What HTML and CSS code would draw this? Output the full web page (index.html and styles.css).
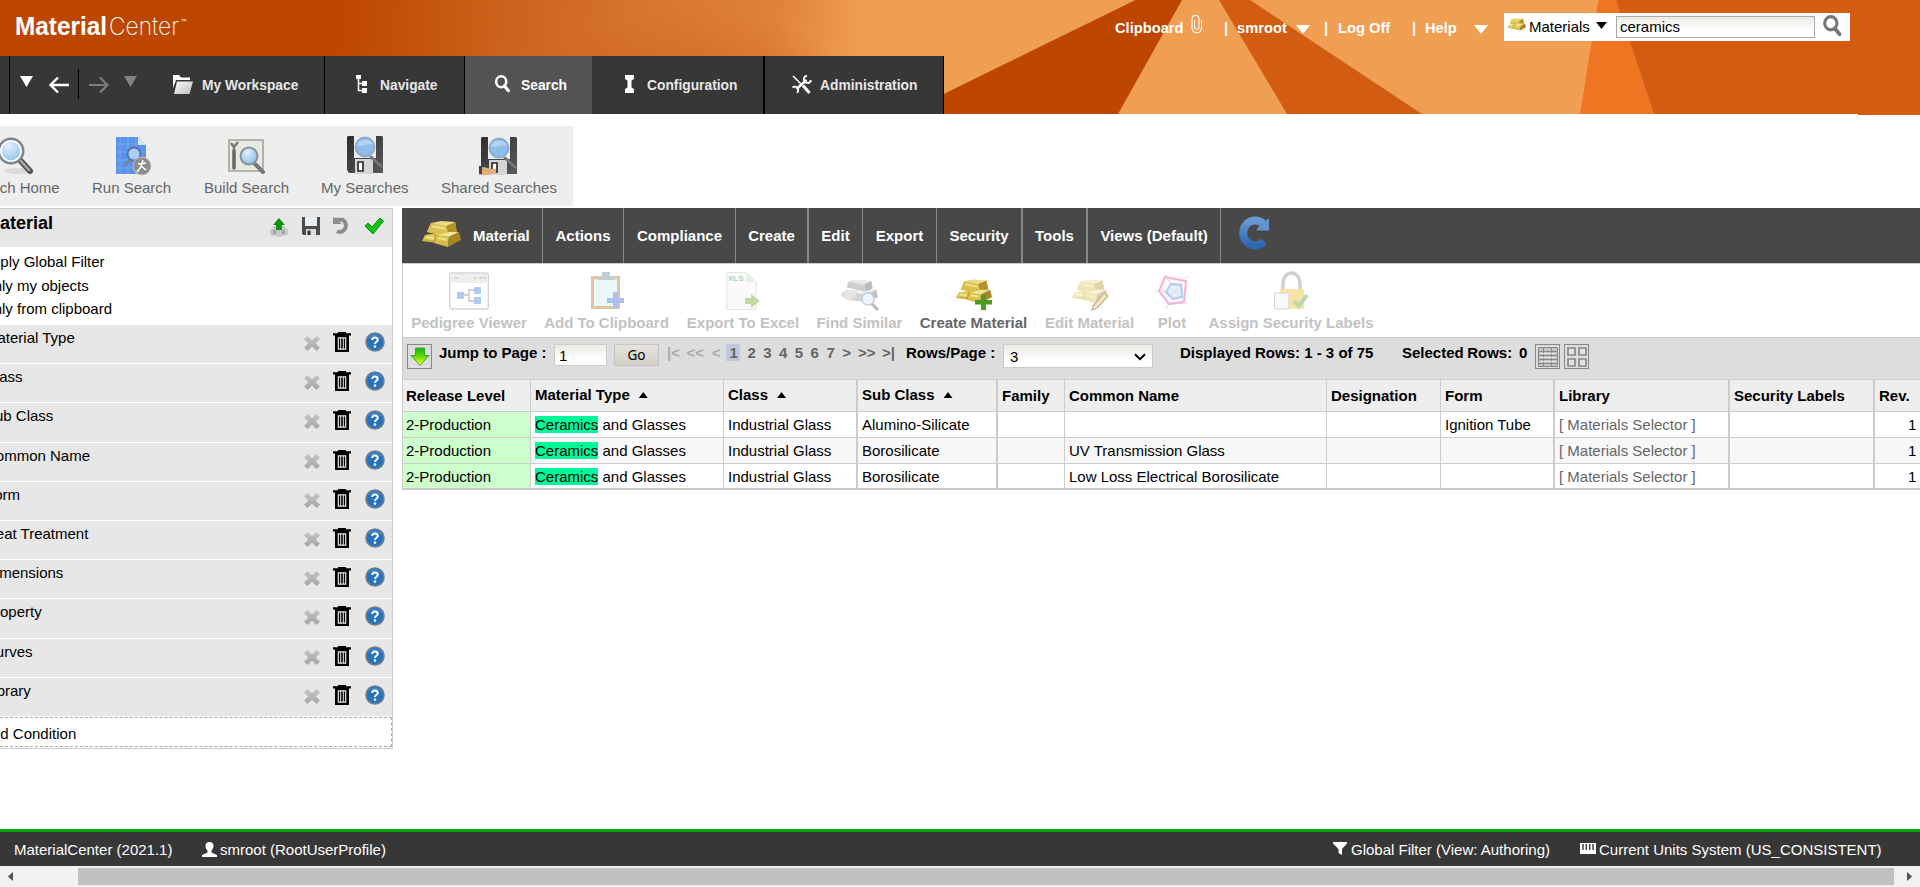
FILE: index.html
```html
<!DOCTYPE html>
<html lang="en">
<head>
<meta charset="utf-8">
<title>MaterialCenter</title>
<link rel="stylesheet" href="styles.css">
</head>
<body>
<svg class="defs" width="0" height="0" aria-hidden="true">
  <defs>
    <linearGradient id="gTop" x1="0" y1="0" x2="1" y2="1"><stop offset="0" stop-color="#e3cf6c"/><stop offset=".5" stop-color="#f1e28c"/><stop offset="1" stop-color="#d3b74a"/></linearGradient>
    <linearGradient id="gFront" x1="0" y1="0" x2="0" y2="1"><stop offset="0" stop-color="#e6cc5a"/><stop offset="1" stop-color="#c9ab36"/></linearGradient>
    <linearGradient id="gs1" x1="0" y1="0" x2="1" y2="1"><stop offset="0" stop-color="#8d8d8d"/><stop offset=".5" stop-color="#c8c8c8"/><stop offset="1" stop-color="#777"/></linearGradient>
    <radialGradient id="lens" cx=".4" cy=".3" r=".8"><stop offset="0" stop-color="#e4f0fb"/><stop offset=".6" stop-color="#a9cdf0"/><stop offset="1" stop-color="#7fb0e2"/></radialGradient>
    <linearGradient id="disk" x1="0" y1="0" x2="1" y2="1"><stop offset="0" stop-color="#2e2e2e"/><stop offset="1" stop-color="#5a5a5a"/></linearGradient>
    <linearGradient id="refresh" x1="0" y1="0" x2="0" y2="1"><stop offset="0" stop-color="#6a9ad4"/><stop offset="1" stop-color="#2f66b0"/></linearGradient>
    <linearGradient id="down" x1="0" y1="0" x2="0" y2="1"><stop offset="0" stop-color="#14b414"/><stop offset=".4" stop-color="#4fd400"/><stop offset="1" stop-color="#ffff30"/></linearGradient>
    <linearGradient id="xg" x1="0" y1="0" x2="0" y2="1"><stop offset="0" stop-color="#c4c4c4"/><stop offset="1" stop-color="#a6a6a6"/></linearGradient>
    <linearGradient id="fold" x1="0" y1="0" x2="1" y2="1"><stop offset="0" stop-color="#fff"/><stop offset="1" stop-color="#bbb"/></linearGradient>
    <symbol id="gold" viewBox="0 0 40 28">
      <path d="M4 15 16 13 22 15 23 24 1 21z" fill="url(#gFront)"/>
      <path d="M10 3 20 1 34 2 36 13 28 16 6 12z" fill="url(#gTop)"/>
      <path d="M10 3 25 6 28 16 6 12z" fill="#d9bf4c"/>
      <path d="M25 6 34 2 36 12 28 16z" fill="#b3922c"/>
      <path d="M12 5 24 7.500 25 10 10 7.500z" fill="#eddd84"/>
      <path d="M17 15 28 17 27 27 13 23z" fill="#d9bd48"/>
      <path d="M17 15 28 12 38 12 28 17z" fill="#f1e493"/>
      <path d="M28 17 38 12 40 20 27 27z" fill="#a98722"/>
      <path d="M6 16 14 17 13 20 4 18.500zM18 17 26 18.500 25.500 21 16.500 19z" fill="#efdf88"/>
      <path d="M15 14 13 22" stroke="#a98a28" stroke-width=".8"/>
    </symbol>
    <symbol id="silver" viewBox="0 0 40 28">
      <path d="M1 15 5 12 18 12 21 21 19 24 6 22 0 18z" fill="url(#gs1)"/>
      <path d="M8 3 13 1 32 2 34 10 29 14 6 9z" fill="url(#gs1)"/>
      <path d="M25 6 33 2 34 10 27 14z" fill="#555"/>
      <path d="M9 4 25 6 27 14 6 9z" fill="#888"/>
      <path d="M17 15 28 17 27 26 14 22z" fill="#999"/>
      <path d="M28 17 38 11 40 19 27 26z" fill="#666"/>
      <path d="M17 15 30 12 38 11 28 17zM3 14 13 12 17 14 5 16zM10 3 14 1 31 2 25 5z" fill="#ccc"/>
    </symbol>
    <symbol id="mag" viewBox="0 0 20 20">
      <ellipse cx="8" cy="7.500" rx="5.600" ry="6" fill="none" stroke="currentColor" stroke-width="2.800"/>
      <path d="M11.500 12 16 17.500" stroke="currentColor" stroke-width="3.400" stroke-linecap="round"/>
    </symbol>
    <symbol id="biglens" viewBox="0 0 36 40">
      <ellipse cx="20" cy="35" rx="15" ry="3" fill="#000" opacity=".08"/>
      <path d="M20 23 31 35" stroke="#555" stroke-width="6" stroke-linecap="round"/>
      <path d="M21 24 30 34" stroke="#aaa" stroke-width="2.500" stroke-linecap="round"/>
      <circle cx="12" cy="15" r="12.300" fill="url(#lens)" stroke="#7d858e" stroke-width="2.400"/>
      <circle cx="12" cy="15" r="10" fill="none" stroke="#fff" stroke-width="1.600"/>
    </symbol>
    <symbol id="save" viewBox="0 0 36 38">
      <path d="M1 0H35L36 1V37H2L0 34V1z" fill="url(#disk)"/>
      <path d="M7 0H29V22H7z" fill="#e9eef2"/>
      <path d="M8 23H26V38H8z" fill="#d6d6d6"/><path d="M11 26H16V35H11z" fill="#fff" stroke="#222" stroke-width="1.600"/>
      <path d="M24 21 34 30" stroke="#777" stroke-width="3" stroke-linecap="round"/>
      <circle cx="18" cy="11" r="9.500" fill="#8fbde9" stroke="#8ca9c6" stroke-width="1.800"/>
      <path d="M9.500 9A9 8 0 0 1 26.500 9C21 6 15 12 9.500 9z" fill="#c3ddf5" opacity=".7"/>
    </symbol>
    <symbol id="del" viewBox="0 0 16 15"><path d="M3.500 0 8 4.200 12.500 0 16 3.300 11.700 7.500 16 11.700 12.500 15 8 10.800 3.500 15 0 11.700 4.300 7.500 0 3.300z" fill="url(#xg)"/></symbol>
    <symbol id="trash" viewBox="0 0 18 20"><path d="M5 0H13V1.300H18V3.500H0V1.300H5zM2 3H16V20H2z" fill="#000"/><path d="M5.300 5.800H12.700V17.200H5.300z" fill="none" stroke="#e7e7e7" stroke-width="1.200"/><path d="M7.700 6V17M10.300 6V17" stroke="#e7e7e7" stroke-width="1"/></symbol>
    <symbol id="help" viewBox="0 0 20 20"><circle cx="10" cy="10" r="9" fill="#2573be" stroke="#72808e" stroke-width="1.600"/><path d="M4 6A8 8 0 0 1 16 6" fill="none" stroke="#6aa5dc" stroke-width="1" opacity=".6"/><path d="M7.200 8C7.200 4.800 12.800 4.800 12.800 7.800 12.800 9.800 10 9.800 10 12" fill="none" stroke="#fff" stroke-width="2"/><circle cx="10" cy="14.600" r="1.300" fill="#fff"/></symbol>
  </defs>
</svg>

<header class="banner">
  <svg class="rays" width="1920" height="114" viewBox="0 0 1920 114" aria-hidden="true">
    <path d="M1135.500 0H1182L1118 114H903z" fill="#bd4600"/>
    <path d="M1219 0H1250L1422 114H1287z" fill="#d25d12"/>
    <path d="M1598.500 0H1616L1654 114H1580z" fill="#f07522"/>
    <path d="M1616 0H1920V114H1654z" fill="#d25d12"/>
  </svg>
  <div class="topline">
    <svg class="logo" width="176" height="30" viewBox="0 0 176 30">
      <text x="0" y="23" class="logo-b" textLength="92" lengthAdjust="spacingAndGlyphs">Material</text>
      <text x="94" y="23" class="logo-l" textLength="70" lengthAdjust="spacingAndGlyphs">Center</text>
      <text x="165.500" y="11" class="logo-t">™</text>
    </svg>
    <div class="account">
      <span>Clipboard</span>
      <svg width="12" height="18" viewBox="0 0 12 18"><path d="M3.500 5V12.500A2.300 2.300 0 0 0 8 12.500V4A3.200 3.200 0 0 0 1 4V13A4.500 4.500 0 0 0 10.500 13V5" fill="none" stroke="#fff" stroke-width="1.100"/></svg>
      <span>|</span><span>smroot</span><i class="tri"></i>
      <span>|</span><span>Log Off</span>
      <span>|</span><span>Help</span><i class="tri"></i>
    </div>
    <div class="quick">
      <svg width="19" height="15"><use href="#gold" width="19" height="15"/></svg>
      <span class="kind">Materials</span><i class="tri black"></i>
      <div class="field q">ceramics</div>
      <svg class="go-mag" width="22" height="22"><use href="#mag" width="22" height="22"/></svg>
    </div>
  </div>
  <nav class="mainnav">
    <div class="edge"></div>
    <div class="history">
      <i class="tri"></i>
      <svg width="21" height="18" viewBox="0 0 21 18"><path d="M20 9H2M9 1.500 1.500 9 9 16.500" fill="none" stroke="#fff" stroke-width="2.400"/></svg>
      <b></b>
      <svg width="21" height="18" viewBox="0 0 21 18"><path d="M1 9H19M12 1.500 19.500 9 12 16.500" fill="none" stroke="#7d7d7d" stroke-width="2.200"/></svg>
      <i class="tri dim"></i>
    </div>
    <a class="tab ws"><svg width="20" height="19" viewBox="0 0 20 19"><path d="M0 0H6L8 2.500H17V5H3L2 8 0 13z" fill="#fff"/><path d="M4 6.500H20L16.500 19H1z" fill="url(#fold)"/></svg><span>My Workspace</span></a>
    <a class="tab nv"><svg width="11" height="18" viewBox="0 0 11 18"><path d="M0 0H5V4H0zM6 6H11V11H6zM6 13H11V18H6z" fill="#fff"/><path d="M2.500 4V15.500H7M2.500 8.500H7" fill="none" stroke="#fff" stroke-width="1.500"/></svg><span>Navigate</span></a>
    <a class="tab se on"><svg width="18" height="18"><use href="#mag" width="18" height="18"/></svg><span>Search</span></a>
    <a class="tab cf"><svg width="9" height="18" viewBox="0 0 9 18"><path d="M0 0H9V4L6.500 5.500V12.500L9 14V18H0V14L2.500 12.500V5.500L0 4z" fill="#fff"/></svg><span>Configuration</span></a>
    <a class="tab ad"><svg width="20" height="19" viewBox="0 0 20 19"><path d="M1 1 9 9" stroke="#fff" stroke-width="1.600"/><path d="M11 10.500 17.500 18" stroke="#fff" stroke-width="3"/><path d="M4.500 14 14.500 5" stroke="#fff" stroke-width="2.400"/><path d="M15 .8A3.600 3.600 0 1 0 19 5M.5 12.500A3.200 3.200 0 1 1 5 17.800" fill="none" stroke="#fff" stroke-width="1.800"/></svg><span>Administration</span></a>
  </nav>
</header>
<div class="under"></div>

<section class="launch">
  <div class="l0"><svg width="36" height="40"><use href="#biglens" width="36" height="40"/></svg><span>Search Home</span></div>
  <div class="l1"><svg width="38" height="40" viewBox="0 0 38 40"><path d="M2 1H24L32 9V38H2z" fill="#5b93ea"/><path d="M6 1V38M14 1V38M22 1V38M2 8H30M2 16H32M2 24H32M2 32H32" stroke="#76a6f0" stroke-width="1"/><path d="M24 1V9H32z" fill="#d8e6fb"/><path d="M17 23 10 30" stroke="#7c8795" stroke-width="3"/><circle cx="20" cy="18" r="6.500" fill="#aecdf5" stroke="#56779f" stroke-width="2"/><circle cx="28" cy="30" r="9" fill="#8d8d8d" stroke="#c4c4c4"/><path d="M29 24 27 31 23 36M27 30 32 34M24 28 32 27" stroke="#fff" stroke-width="1.600" fill="none"/></svg><span>Run Search</span></div>
  <div class="l2"><svg width="38" height="38" viewBox="0 0 38 38"><path d="M1 3H35V34H1z" fill="#e9e9e4" stroke="#a3a39b" stroke-width="1.600"/><path d="M6 14V31" stroke="#666" stroke-width="3.500" stroke-linecap="round"/><path d="M3 6 6 10 10 5M6 10V14" stroke="#777" stroke-width="2.500" fill="none"/><path d="M27 27 35 35" stroke="#777" stroke-width="4" stroke-linecap="round"/><circle cx="21" cy="19" r="8.500" fill="url(#lens)" stroke="#8a9299" stroke-width="2"/></svg><span>Build Search</span></div>
  <div class="l3"><svg width="36" height="38"><use href="#save" width="36" height="38"/></svg><span>My Searches</span></div>
  <div class="l4"><svg width="38" height="38" viewBox="0 0 38 38"><use href="#save" x="2" width="36" height="38"/><path d="M0 31 5 30 12 32H17V36L9 38H0z" fill="#e2ac77"/><path d="M0 29H3V37H0z" fill="#444"/></svg><span>Shared Searches</span></div>
</section>

<main class="work">
  <aside class="criteria">
    <div class="chead"><h2>Material</h2>
      <svg width="20" height="20" viewBox="0 0 20 20"><path d="M1 13 5 9H15L19 13V18L10 20 1 18z" fill="#c5c9ca"/><path d="M4 13H7V17H4zM13 13H16V17H13z" fill="#9ba3a3"/><path d="M10 1 16 8H13V13H7V8H4z" fill="#0b930b"/></svg>
      <svg width="18" height="18" viewBox="0 0 18 18"><path d="M0 0H18V18H1.500L0 16.500z" fill="#4b4b4b"/><path d="M3 0H15V9H3z" fill="#e6edf5"/><path d="M4 12H14V18H4z" fill="#ddd"/><path d="M5.500 13.500H8.500V18H5.500z" fill="#333"/></svg>
      <svg width="18" height="18" viewBox="0 0 18 18"><path d="M1 3H9.500A5.500 5.700 0 1 1 4 14.500" fill="none" stroke="#8d8d8d" stroke-width="4" transform="translate(0 -.3)"/><path d="M0 0 9 7H0z" fill="#8d8d8d"/></svg>
      <svg width="20" height="18" viewBox="0 0 20 18"><path d="M1 9 4 6 8 10 16 1 19.500 4 9 17z" fill="#12c112" stroke="#0a8c0a"/></svg>
    </div>
    <div class="flags"><span>Apply Global Filter</span><span>Only my objects</span><span>Only from clipboard</span></div>
    <div class="crit" id="crit"></div>
    <div class="addc">Add Condition</div>
  </aside>

  <section class="results">
    <div class="menu">
      <a class="m0"><svg width="40" height="28"><use href="#gold" width="40" height="28"/></svg><span>Material</span></a>
      <a class="m1">Actions</a><a class="m2">Compliance</a><a class="m3">Create</a><a class="m4">Edit</a><a class="m5">Export</a><a class="m6">Security</a><a class="m7">Tools</a><a class="m8">Views (Default)</a>
      <svg class="reload" width="34" height="36" viewBox="0 0 34 36"><path d="M26 8.500A12 12.500 0 1 0 27 26.500" fill="none" stroke="url(#refresh)" stroke-width="8"/><path d="M19 15.500 24 9 32 3V15.500z" fill="#6093d0"/></svg>
    </div>
    <div class="actions">
      <div class="a0 off"><svg width="40" height="40" viewBox="0 0 40 40"><rect x=".7" y="2" width="38.600" height="36" rx="2" fill="#fff" stroke="#999" stroke-width="1.400"/><path d="M1 3H39V12H1z" fill="#d5d5d5"/><path d="M5 7H9M25 7H28M30 7H33M34 7H37" stroke="#999" stroke-width="2"/><path d="M14 24H20M25 19H20V30H25" fill="none" stroke="#666" stroke-width="1.300"/><path d="M8 21H15V28H8zM25 16H32V23H25zM25 26H32V33H25z" fill="#3a83dc"/></svg><span>Pedigree Viewer</span></div>
      <div class="a1 off"><svg width="34" height="40" viewBox="0 0 34 40"><path d="M1 5H30V38H1z" fill="#b86c22"/><path d="M4 8H27V35H4z" fill="#cdeefa"/><path d="M7 5H12V1H20V5H25V9H7z" fill="#6f8285"/><path d="M23 21H28V27H34V32H28V38H23V32H17V27H23z" fill="#2b66d6"/></svg><span>Add To Clipboard</span></div>
      <div class="a2 off"><svg width="34" height="40" viewBox="0 0 34 40"><path d="M.7 1.500H20L30 11V38.500H.7z" fill="#f2f5f1" stroke="#bbb"/><path d="M20 1.500V11H30z" fill="#d2d6d1"/><text x="2" y="10" class="xls">XLS</text><path d="M19 27H25V23L34 30 25 37V33H19z" fill="#5ea521"/></svg><span>Export To Excel</span></div>
      <div class="a3 off"><svg width="40" height="40" viewBox="0 0 40 40"><use href="#silver" x="1" y="7" width="37" height="28"/><path d="M31 32 38 39" stroke="#555" stroke-width="3"/><circle cx="28" cy="28" r="6" fill="#d5e9fb" stroke="#5d8db8" stroke-width="1.500"/></svg><span>Find Similar</span></div>
      <div class="a4"><svg width="40" height="40" viewBox="0 0 40 40"><use href="#gold" x="1" y="7" width="37" height="27"/><path d="M27 24H32V29H38V33.500H32V39H27V33.500H21V29H27z" fill="#4d9c20"/></svg><span>Create Material</span></div>
      <div class="a5 off"><svg width="40" height="40" viewBox="0 0 40 40"><use href="#gold" x="1" y="7" width="37" height="27"/><path d="M23 35 34 22 38 25 27 37 22 39z" fill="#edc444" stroke="#594422" stroke-width="1.200"/></svg><span>Edit Material</span></div>
      <div class="a6 off"><svg width="34" height="40" viewBox="0 0 34 40"><path d="M10 6 31 10 29 31 14 33 4 20z" fill="#fae9f3" stroke="#e84763" stroke-width="2"/><path d="M4 20 14 33 29 31" fill="none" stroke="#d04bd0" stroke-width="2"/><path d="M16 13 26 14 27 26 18 28 11 21z" fill="#c5dcfa" stroke="#397ce3" stroke-width="2"/><path d="M16 17 23 24M23 17 16 24M10 3 16 14M0 20H14M29 8 34 5M29 30 33 34M14 32 11 38" stroke="#999" stroke-width=".8"/></svg><span>Plot</span></div>
      <div class="a7 off"><svg width="36" height="40" viewBox="0 0 36 40"><path d="M10 20V12A8.500 10 0 0 1 27 12V20" fill="none" stroke="#888" stroke-width="3.400"/><path d="M7 18H31V38H7z" fill="#f2ba20"/><path d="M1.500 22H16V38H1.500z" fill="#eee" stroke="#999"/><path d="M21 30 26 35 34 24" fill="none" stroke="#4fac27" stroke-width="4"/></svg><span>Assign Security Labels</span></div>
    </div>
    <div class="pager">
      <div class="ibtn p-dl"><svg width="20" height="20" viewBox="0 0 20 20"><path d="M5.500 1H14.500V8.500H19L10 18.500 1 8.500H5.500z" fill="url(#down)" stroke="#35a835"/></svg></div>
      <span class="p-jump">Jump to Page :</span>
      <div class="field p-in">1</div>
      <div class="gobtn">Go</div>
      <div class="pages"><i class="k0">|&lt;</i><i class="k1">&lt;&lt;</i><i class="k2">&lt;</i><b class="cur">1</b><b>2</b><b>3</b><b>4</b><b>5</b><b>6</b><b>7</b><b>&gt;</b><b class="w">&gt;&gt;</b><b class="w">&gt;|</b></div>
      <span class="p-rows">Rows/Page :</span>
      <div class="field p-sel"><span>3</span><svg width="12" height="8" viewBox="0 0 12 8"><path d="M1 1.200 6 6.200 11 1.200" fill="none" stroke="#000" stroke-width="2"/></svg></div>
      <span class="p-disp">Displayed Rows: 1 - 3 of 75</span>
      <span class="p-selr">Selected Rows:&nbsp; 0</span>
      <div class="ibtn p-g1"><svg width="20" height="20" viewBox="0 0 20 20"><path d="M.5.500H19.500V19.500H.5z" fill="#c4c4c4" stroke="#888"/><path d="M5.500 0V20M13.500 0V20M0 4.500H20M0 8.500H20M0 12.500H20M0 16.500H20" stroke="#888" stroke-width="1"/><path d="M2 6.500H18M2 10.500H18M2 14.500H18" stroke="#e4e4e4" stroke-width="1"/></svg></div>
      <div class="ibtn p-g2"><svg width="20" height="20" viewBox="0 0 20 20"><path d="M1 1H8V8H1zM12 1H19V8H12zM1 12H8V19H1zM12 12H19V19H12z" fill="#e4e4e4" stroke="#888" stroke-width="1.700"/></svg></div>
    </div>
    <table>
      <colgroup><col class="c0"><col class="c1"><col class="c2"><col class="c3"><col class="c4"><col class="c5"><col class="c6"><col class="c7"><col class="c8"><col class="c9"><col class="c10"></colgroup>
      <thead><tr><th>Release Level</th><th class="s">Material Type<i></i></th><th class="s d">Class<i></i></th><th class="s d">Sub Class<i></i></th><th>Family</th><th>Common Name</th><th>Designation</th><th class="d">Form</th><th class="d">Library</th><th class="d">Security Labels</th><th>Rev.</th></tr></thead>
      <tbody>
        <tr><td>2-Production</td><td><mark>Ceramics</mark> and Glasses</td><td class="d">Industrial Glass</td><td class="d">Alumino-Silicate</td><td></td><td></td><td></td><td class="d">Ignition Tube</td><td class="lib d">[ Materials Selector ]</td><td class="d"></td><td class="rev">1</td></tr>
        <tr><td>2-Production</td><td><mark>Ceramics</mark> and Glasses</td><td class="d">Industrial Glass</td><td class="d">Borosilicate</td><td></td><td>UV Transmission Glass</td><td></td><td class="d"></td><td class="lib d">[ Materials Selector ]</td><td class="d"></td><td class="rev">1</td></tr>
        <tr><td>2-Production</td><td><mark>Ceramics</mark> and Glasses</td><td class="d">Industrial Glass</td><td class="d">Borosilicate</td><td></td><td>Low Loss Electrical Borosilicate</td><td></td><td class="d"></td><td class="lib d">[ Materials Selector ]</td><td class="d"></td><td class="rev">1</td></tr>
      </tbody>
    </table>
  </section>
</main>

<footer class="status">
  <span class="f0">MaterialCenter (2021.1)</span>
  <span class="f1"><svg width="15" height="15" viewBox="0 0 15 15"><path d="M7.500 0C13 0 12 6.500 9.500 8.500V10.500L15 13V15H0V13L5.500 10.500V8.500C3 6.500 2 0 7.500 0z" fill="#fff"/></svg>smroot (RootUserProfile)</span>
  <span class="f2"><svg width="14" height="14" viewBox="0 0 14 14"><path d="M0 0H14V1.500L9 7V13L5.500 11V7L0 1.500z" fill="#fff"/></svg>Global Filter (View: Authoring)</span>
  <span class="f3"><svg width="16" height="11" viewBox="0 0 16 11"><path d="M0 0H16V11H0z" fill="#fff"/><path d="M3 1V7M6.300 1V7M9.700 1V7M13 1V7" stroke="#444" stroke-width="1.500"/></svg>Current Units System (US_CONSISTENT)</span>
</footer>
<div class="hscroll"><i class="lft"></i><div class="thumb"></div><i class="rgt"></i></div>
<script src="app.js"></script>
</body>
</html>
```
FILE: styles.css
```css
* { box-sizing: border-box; }
body { margin: 0; width: 1920px; height: 887px; overflow: hidden; display: flex; flex-direction: column; background: #fff; color: #000; font: 15px/18px "Liberation Sans", Arial, sans-serif; white-space: nowrap; }
svg { display: block; flex: none; }
.defs { position: absolute; }
i { font-style: normal; }

.banner { position: relative; height: 114px; flex: none; background: radial-gradient(ellipse 170px 90px at 690px 100px, rgba(200,90,20,.55), rgba(200,90,20,0)), linear-gradient(97deg, #bd4600 340px, #cc621b 500px, #d8752c 640px, #df8238 770px, #f09e52 860px); }
.rays { position: absolute; left: 0; top: 0; }
.topline { position: relative; display: flex; height: 56px; }
.logo { margin: 12px 0 0 15px; }
.logo-b { font: bold 25px "Liberation Sans", sans-serif; fill: #fff; }
.logo-l { font: 200 25px Inter, "Roboto", sans-serif; fill: #fff; }
.logo-t { font: 6px "Liberation Sans", sans-serif; fill: #fff; }
.account { margin: 0 0 0 924px; padding-top: 19px; display: grid; grid-template-columns: 76px 33px 13px 59px 28px 14px 74px 13px 49px 29px; color: #fff; font-size: 14.700px; font-weight: bold; width: 388px; }
.account svg { margin-top: -4px; }
.account .tri { margin-top: 6px; }
.tri { display: block; width: 14px; height: 9px; background: #fff; clip-path: polygon(0 0, 100% 0, 50% 100%); }
.tri.black { background: #000; width: 11px; height: 7px; margin-left: 6px; }
.tri.dim { background: #828282; }
.quick { display: flex; width: 346px; height: 28px; margin: 13px 0 0 1px; padding-left: 3px; background: #fff; }
.quick > svg:first-child { margin: 4px 3px 0 0; }
.quick .tri { margin-top: 9px; margin-right: 9px; }
.kind { width: 61px; padding-top: 5px; }
.field { border: 1px solid #aaa; background: linear-gradient(#ece9e4, #fff 70%); }
.q { width: 199px; height: 22px; margin-top: 3px; padding: 1px 3px; }
.go-mag { margin: 2px 0 0 7px; color: #777; }

.mainnav { position: relative; display: flex; width: 944px; height: 58px; background: #373737; border-right: 1px solid #000; }
.edge { width: 10px; border-right: 1px solid #000; }
.history { width: 147px; display: grid; grid-template-columns: 29px 29px 10px 36px 13px; padding-left: 10px; padding-top: 13px; }
.history svg { margin-top: 7px; }
.history b { width: 1px; height: 30px; background: #000; }
.history .tri { width: 13px; height: 11px; margin-top: 7px; }
.tab { display: flex; align-items: flex-start; color: #e8e8e8; font: bold 13.800px/18px "Liberation Sans", sans-serif; border-right: 1px solid #000; }
.tab svg { margin-top: 19px; }
.tab span { margin-top: 21px; }
.ws { width: 168px; padding-left: 16px; gap: 9px; }
.nv { width: 140px; padding-left: 31px; gap: 13px; }
.se { width: 127px; padding-left: 29px; gap: 9px; }
.se.on { background: #535353; color: #fff; border: 0; }
.cf { width: 173px; padding-left: 33px; gap: 13px; border-right-width: 2px; }
.ad { padding-left: 27px; gap: 8px; border: 0; }
.under { width: 62px; height: 1px; flex: none; margin-left: 1858px; background: #d25d12; }

.launch { display: flex; width: 573px; height: 80px; flex: none; margin-top: 11px; background: #eee; color: #666; }
.launch > div { flex: none; }
.launch svg { margin-top: 10px; height: 40px; }
.launch span { display: block; margin-top: 3px; }
.l0 { width: 124px; margin-left: -32px; } .l0 svg { margin-left: 31px; }
.l1 { width: 112px; } .l1 svg { margin-left: 22px; }
.l2 { width: 117px; } .l2 svg { margin-left: 24px; }
.l3 { width: 120px; } .l3 svg { margin-left: 26px; }
.l4 svg { margin-left: 38px; }

.work { display: flex; margin-top: 2px; height: 621px; flex: none; }
.criteria { width: 393px; height: 541px; border: 1px solid #ccc; border-left: 0; margin-right: 9px; flex: none; }
.chead { display: flex; height: 38px; background: #e7e7e7; padding: 8px 8px 0 0; gap: 13px; justify-content: flex-end; }
.chead h2 { margin: -4px auto 0 -15px; font: bold 18px/20px "Liberation Sans", sans-serif; }
.flags { height: 78px; display: flex; flex-direction: column; padding-top: 6px; margin-left: -18px; }
.flags span { height: 23.500px; }
.crit { height: 392px; }
.row { display: flex; height: 39.200px; background: #e7e7e7; border-bottom: 1px solid #fff; padding-right: 7.500px; }
.row span { margin: 4px auto 0 -15px; }
.row svg { margin-top: 7px; }
.row svg:first-of-type { margin: 11px 13px 0 0; }
.row svg:last-of-type { margin-left: 14px; }
.addc { height: 30px; border: 1px dashed #aaa; border-left: 0; padding-top: 7px; text-indent: -18px; }

.results { width: 1518px; flex: none; overflow: hidden; }
.menu { display: flex; height: 55px; background: #484848; color: #fff; font-weight: bold; }
.menu a { padding-top: 19px; text-align: center; border-right: 1px solid #888; flex: none; }
.menu .m0 { width: 141px; display: flex; padding: 12px 0 0 19px; gap: 12px; }
.m0 span { margin-top: 7px; }
.m1 { width: 81px; } .m2 { width: 112px; } .menu .m3 { width: 73px; border-right-width: 2px; } .m4 { width: 54px; } .m5 { width: 74px; } .menu .m6 { width: 86px; border-right-width: 2px; } .menu .m7 { width: 65px; border-right-width: 2px; } .m8 { width: 133px; }
.reload { margin: 7px 0 0 16px; }
.actions { display: flex; height: 74px; border-top: 1px solid #ccc; border-left: 1px solid #ccc; font-weight: bold; color: #666; }
.actions > div { display: flex; flex-direction: column; align-items: center; padding-top: 7px; flex: none; }
.actions span { margin-top: 3px; }
.off { opacity: .4; }
.a0 { width: 132px; } .a1 { width: 143px; } .a2 { width: 130px; } .a3 { width: 103px; } .a4 { width: 125px; } .a5 { width: 107px; } .a6 { width: 58px; } .a7 { width: 180px; }
.xls { font: bold 8px "Liberation Sans", sans-serif; fill: #2b9a2b; }
.pager { display: flex; height: 42px; background: #ddd; border-top: 1px solid #ccc; border-left: 1px solid #ccc; padding: 6px 0 0 4px; font-weight: bold; }
.pager > * { flex: none; }
.ibtn { width: 25px; height: 25px; border: 1px solid #888; padding: 1.500px; }
.p-jump { width: 122px; padding-left: 7px; }
.p-in { width: 53px; height: 22px; border: 1px solid #ccc; padding: 2px 4px; font-weight: normal; }
.gobtn { width: 45px; height: 22px; margin-left: 7px; border: 1px solid #c4c4c4; background: linear-gradient(#e6e3dc, #d3cfc7); text-align: center; font: 13.600px/20px "Noto Sans", sans-serif; }
.pages { display: flex; margin-left: 8px; width: 239px; color: #666; height: 17px; }
.pages i { color: #aaa; font-weight: bold; } .k0 { width: 20px; } .k1 { width: 26px; } .k2 { width: 15px; }
.pages b { flex: none; width: 15.800px; } .pages b.cur { width: 14px; padding-left: 3px; margin-right: 7px; background: #bfc9dd; }
.pages b.w { width: 24px; }
.p-rows { width: 97px; }
.p-sel { width: 150px; height: 24px; border-color: #ccc; display: flex; justify-content: space-between; padding: 3px 6px; font-weight: normal; }
.p-sel svg { margin-top: 5px; }
.p-disp { width: 222px; margin-left: 27px; }
.p-selr { width: 133px; word-spacing: -.7px; }
.p-g2 { margin-left: 4px; }

table { table-layout: fixed; width: 1567px; border-collapse: separate; border-spacing: 0; border-left: 1px solid #ccc; border-top: 1px solid #ccc; }
.c0 { width: 128px; } .c1 { width: 193px; } .c2 { width: 134px; } .c3 { width: 140px; } .c4 { width: 67px; } .c5 { width: 262px; } .c6 { width: 114px; } .c7 { width: 114px; } .c8 { width: 175px; } .c9 { width: 145px; } .c10 { width: 94px; }
th, td { text-align: left; padding: 0 0 0 4px; border-right: 1px solid #ccc; border-bottom: 1px solid #ccc; overflow: hidden; }
.d { border-right-width: 2px; }
th { background: #eee; height: 32px; padding-top: 1px; }
th:first-child { padding-left: 3px; }
th.s { padding-top: 0; padding-bottom: 1px; }
th i { display: inline-block; width: 9px; height: 6px; margin: 0 0 2px 9px; background: #000; clip-path: polygon(50% 0, 100% 100%, 0 100%); }
td { height: 26px; }
td:first-child { background: #cfc; padding-left: 3px; }
tbody tr:nth-child(2) td:not(:first-child) { background: #f7f7f7; }
tbody tr:last-child td { border-bottom-width: 2px; padding-top: 2px; }
mark { background: #00fa9a; color: #000; }
.lib { color: #666; }
td.rev { padding-left: 33px; }

.status { display: flex; flex: none; height: 37px; background: #373737; border-top: 3px solid #00a80a; color: #fff; padding-top: 9px; }
.status span { display: flex; gap: 3px; }
.status .f0 { margin-left: 14px; width: 188px; }
.f1 { width: 1131px; }
.status .f2 { width: 247px; gap: 4px; }
.status svg { margin-top: 1px; }
.status .f3 svg { margin-top: 2px; }
.hscroll { display: flex; align-items: center; height: 21px; flex: none; background: #f1f1f1; }
.thumb { width: 1816px; height: 17px; background: #c1c1c1; }
.lft, .rgt { width: 5px; height: 9px; background: #505050; }
.lft { margin: 0 65px 0 8px; clip-path: polygon(100% 0, 100% 100%, 0 50%); }
.rgt { margin-left: 13px; clip-path: polygon(0 0, 100% 50%, 0 100%); }
```
FILE: app.js
```javascript
const names = ["Material Type", "Class", "Sub Class", "Common Name", "Form", "Heat Treatment", "Dimensions", "Property", "Curves", "Library"];
const icon = (id, w, h) => `<svg width="${w}" height="${h}"><use href="#${id}" width="${w}" height="${h}"/></svg>`;
document.getElementById("crit").innerHTML = names
  .map(n => `<div class="row"><span>${n}</span>${icon("del", 16, 15)}${icon("trash", 18, 20)}${icon("help", 20, 20)}</div>`)
  .join("");
```
